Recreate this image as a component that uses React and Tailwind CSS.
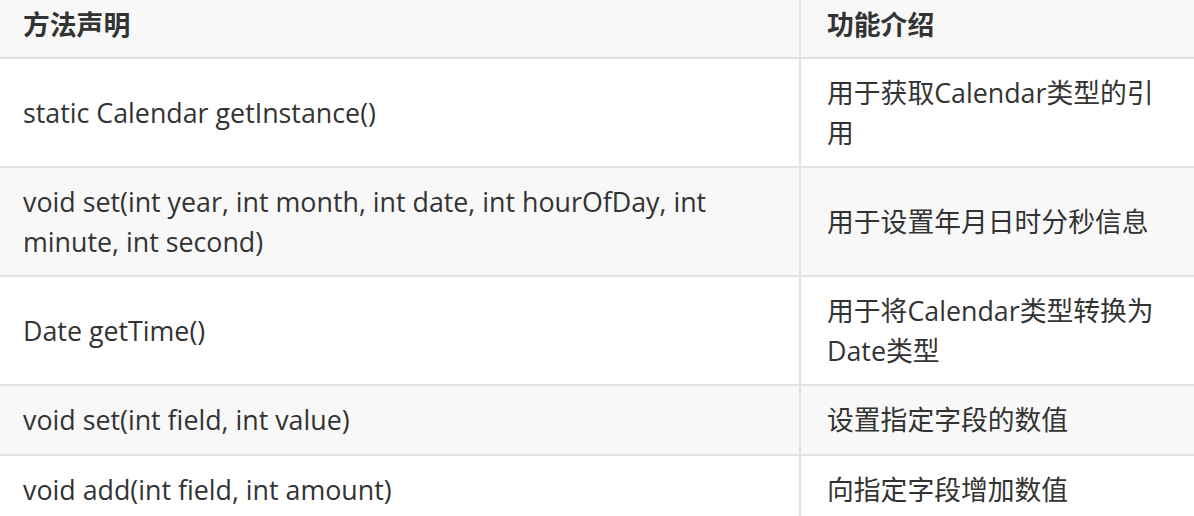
import React from "react";

const rows = [
  ["static Calendar getInstance()", "用于获取Calendar类型的引用"],
  ["void set(int year, int month, int date, int hourOfDay, int minute, int second)", "用于设置年月日时分秒信息"],
  ["Date getTime()", "用于将Calendar类型转换为Date类型"],
  ["void set(int field, int value)", "设置指定字段的数值"],
  ["void add(int field, int amount)", "向指定字段增加数值"],
];

export default function App() {
  return (
    <div
      className="w-[1194px] h-[516px] overflow-hidden bg-white text-[#333333] text-[26.8px] leading-[39.5px]"
      style={{ fontFamily: '"Open Sans", "Noto Sans CJK SC", sans-serif' }}
    >
      <div className="flex bg-[#f8f8f8] border-b-2 border-[#dfe2e5] h-[59px]">
        <div className="w-[801px] shrink-0 border-r-2 border-[#dfe2e5] pl-[23px] pr-[24px] pt-[5px] font-bold">
          方法声明
        </div>
        <div className="flex-1 pl-[26px] pr-[24px] pt-[5px] font-bold">功能介绍</div>
      </div>
      {rows.map(([a, b], i) => (
        <div
          key={i}
          className={
            "flex border-b-2 border-[#dfe2e5] " + (i % 2 === 1 ? "bg-[#f8f8f8]" : "bg-white")
          }
        >
          <div className="w-[801px] shrink-0 border-r-2 border-[#dfe2e5] pl-[23px] pr-[24px] py-[14px] flex items-center">
            <span>{a}</span>
          </div>
          <div className="flex-1 pl-[26px] pr-[24px] py-[14px] flex items-center">
            <span>{b}</span>
          </div>
        </div>
      ))}
    </div>
  );
}
